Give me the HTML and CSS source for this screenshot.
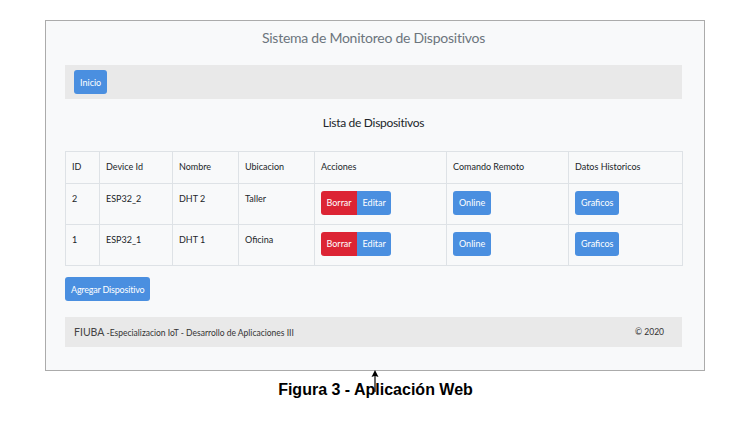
FILE: index.html
```html
<!DOCTYPE html>
<html lang="es">
<head>
<meta charset="utf-8">
<title>Figura 3 - Aplicación Web</title>
<link rel="stylesheet" href="styles.css">
</head>
<body>
<div class="figure">
  <div class="frame">
    <div class="app-title">Sistema de Monitoreo de Dispositivos</div>
    <nav class="navbar"><a class="btn btn-blue">Inicio</a></nav>
    <h2 class="subtitle">Lista de Dispositivos</h2>
    <table class="devices">
      <colgroup>
        <col class="c-id"><col class="c-dev"><col class="c-nom"><col class="c-ubi"><col class="c-acc"><col class="c-cmd"><col class="c-dat">
      </colgroup>
      <thead>
        <tr><th>ID</th><th>Device Id</th><th>Nombre</th><th>Ubicacion</th><th>Acciones</th><th>Comando Remoto</th><th>Datos Historicos</th></tr>
      </thead>
      <tbody>
        <tr>
          <td>2</td><td>ESP32_2</td><td>DHT 2</td><td>Taller</td>
          <td><div class="btn-group"><a class="btn btn-red">Borrar</a><a class="btn btn-blue">Editar</a></div></td>
          <td><a class="btn btn-blue">Online</a></td>
          <td><a class="btn btn-blue">Graficos</a></td>
        </tr>
        <tr>
          <td>1</td><td>ESP32_1</td><td>DHT 1</td><td>Oficina</td>
          <td><div class="btn-group"><a class="btn btn-red">Borrar</a><a class="btn btn-blue">Editar</a></div></td>
          <td><a class="btn btn-blue">Online</a></td>
          <td><a class="btn btn-blue">Graficos</a></td>
        </tr>
      </tbody>
    </table>
    <div class="add-row"><a class="btn btn-blue btn-add">Agregar Dispositivo</a></div>
    <footer class="app-footer">
      <span class="foot-left"><span class="fiuba">FIUBA</span> -Especializacion IoT - Desarrollo de Aplicaciones III</span>
      <span class="foot-right">© 2020</span>
    </footer>
  </div>
  <p class="caption">Figura 3 - Aplicación Web</p>
  <svg class="cursor" width="10" height="24" viewBox="0 0 10 24">
    <path d="M5 1 L8.5 8 L5.6 7 L5.6 23 L4.4 23 L4.4 7 L1.5 8 Z" fill="#000"/>
  </svg>
</div>
</body>
</html>
```
FILE: styles.css
```css
html, body {
  margin: 0;
  padding: 0;
  background: #ffffff;
}

.figure {
  position: relative;
  width: 751px;
  height: 421px;
  padding-top: 20px;
  box-sizing: border-box;
}

.frame {
  margin-left: 45px;
  width: 660px;
  height: 351px;
  box-sizing: border-box;
  border: 1px solid #ababab;
  background: #f8f9fa;
  padding: 0 22px 0 19px;
  display: flex;
  flex-direction: column;
  font-family: Lato, "Open Sans", sans-serif;
  color: #212529;
}

.app-title {
  height: 44px;
  padding-top: 7px;
  box-sizing: border-box;
  text-align: center;
  font-size: 14px;
  letter-spacing: -0.25px;
  line-height: 20px;
  color: #6c757d;
}

.navbar {
  height: 34px;
  background: #e9e9e9;
  display: flex;
  align-items: center;
  padding-left: 9px;
}

.btn {
  display: inline-flex;
  align-items: center;
  justify-content: center;
  height: 24px;
  padding: 0 6px;
  box-sizing: border-box;
  color: #ffffff;
  font-size: 9px;
  border-radius: 3px;
  white-space: nowrap;
}

.btn-blue { background: #4a8fe0; }
.btn-red { background: #dc2434; }

.btn-group { display: inline-flex; }
.btn-group .btn { padding: 0 5.5px; }
.btn-group .btn:first-child { border-radius: 3px 0 0 3px; }
.btn-group .btn:last-child { border-radius: 0 3px 3px 0; }

.subtitle {
  margin: 15px 0 0;
  height: 37px;
  font-weight: normal;
  font-size: 12px;
  letter-spacing: -0.3px;
  line-height: 18px;
  text-align: center;
  color: #212529;
}

.devices {
  width: 617px;
  border-collapse: collapse;
  table-layout: fixed;
  font-size: 9px;
}

.c-id { width: 34px; }
.c-dev { width: 73px; }
.c-nom { width: 66px; }
.c-ubi { width: 76px; }
.c-acc { width: 132px; }
.c-cmd { width: 122px; }
.c-dat { width: 114px; }

.devices th, .devices td {
  border: 1px solid #dee2e6;
  padding: 7px 6px 0;
  text-align: left;
  vertical-align: top;
  line-height: 16px;
  font-weight: normal;
}

.devices thead tr { height: 32px; }
.devices tbody tr { height: 41px; }

.add-row {
  margin-top: 11px;
  display: flex;
}

.btn-add {
  padding: 0 6px;
  letter-spacing: -0.2px;
}

.app-footer {
  margin-top: 16px;
  height: 30px;
  background: #e9e9e9;
  display: flex;
  align-items: center;
  justify-content: space-between;
  padding: 0 18px 0 9px;
  font-size: 8.5px;
  color: #333;
}

.fiuba {
  font-size: 10.5px;
  color: #444;
}

.caption {
  margin: 10px 0 0;
  text-align: center;
  font-family: "Liberation Sans", Arial, sans-serif;
  font-weight: bold;
  font-size: 16px;
  line-height: 18px;
  color: #000;
}

.cursor {
  position: absolute;
  left: 370px;
  top: 369px;
}
```
